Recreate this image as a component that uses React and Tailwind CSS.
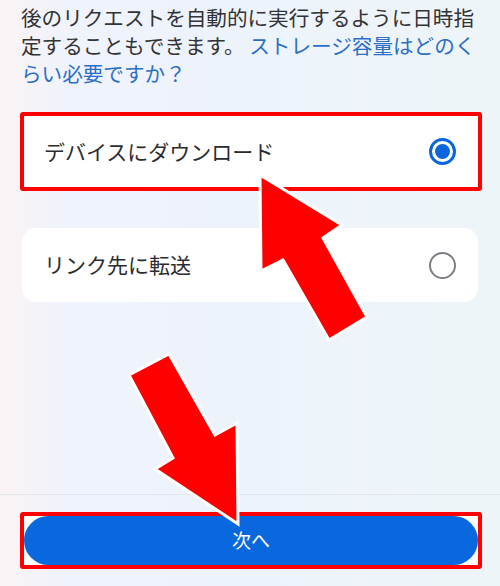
import React from "react";

const font = { fontFamily: '"Noto Sans CJK JP", "Noto Sans", sans-serif' };

function Radio({ checked }) {
  if (checked) {
    return (
      <span className="flex h-[27px] w-[27px] items-center justify-center rounded-full border-[3px] border-[#0a66dc]">
        <span className="h-[15px] w-[15px] rounded-full bg-[#0a66dc]" />
      </span>
    );
  }
  return <span className="h-[27px] w-[27px] rounded-full border-[2.5px] border-[#7d7d84]" />;
}

function Arrows() {
  return (
    <svg className="pointer-events-none absolute inset-0" width="500" height="586" viewBox="0 0 500 586">
      <polygon
        points="260,175 261,271 283,260 329,340 367,317 323,238 342,225"
        fill="#ff0000"
        stroke="#ffffff"
        strokeWidth="3"
        strokeLinejoin="miter"
      />
      <polygon
        points="129,375 169,354 215,435 237,423 238,524 155,469 173,458"
        fill="#ff0000"
        stroke="#ffffff"
        strokeWidth="3"
        strokeLinejoin="miter"
      />
    </svg>
  );
}

export default function App() {
  return (
    <div
      className="relative h-[586px] w-[500px] overflow-hidden bg-[#edf3fb] bg-[linear-gradient(90deg,#fbf3f4_0%,#f0f3fb_12%,#edf3fb_50%,#eef5f8_100%)]"
      style={font}
    >
      <div className="flex h-[494px] flex-col">
        <p className="ml-[21px] w-[455px] pt-[3px] text-[20.6px] leading-[28px] text-[#333336]">
          後のリクエストを自動的に実行するように日時指定することもできます。{" "}
          <span className="text-[#2b6fc9]">ストレージ容量はどのくらい必要ですか？</span>
        </p>

        <div className="ml-[20px] mt-[25px] flex h-[79px] w-[462px] items-center justify-between rounded-[3px] border-4 border-[#ff0000] bg-white pl-[20px] pr-[22px]">
          <span className="text-[21px] text-[#2c2c2e]">デバイスにダウンロード</span>
          <Radio checked />
        </div>

        <div className="ml-[22px] mt-[37px] flex h-[74px] w-[456px] items-center justify-between rounded-[14px] bg-white pl-[22px] pr-[22px]">
          <span className="text-[21px] text-[#2c2c2e]">リンク先に転送</span>
          <Radio />
        </div>
      </div>

      <div className="h-[92px] border-t border-[#e2e7ee] pt-[17px]">
        <div className="ml-[20px] h-[57px] w-[462px] rounded-[3px] border-4 border-[#ff0000] bg-white p-0">
          <button
            type="button"
            className="flex h-full w-full items-center justify-center rounded-full bg-[#0a68de] text-[19px] text-white"
          >
            次へ
          </button>
        </div>
      </div>

      <Arrows />
    </div>
  );
}
